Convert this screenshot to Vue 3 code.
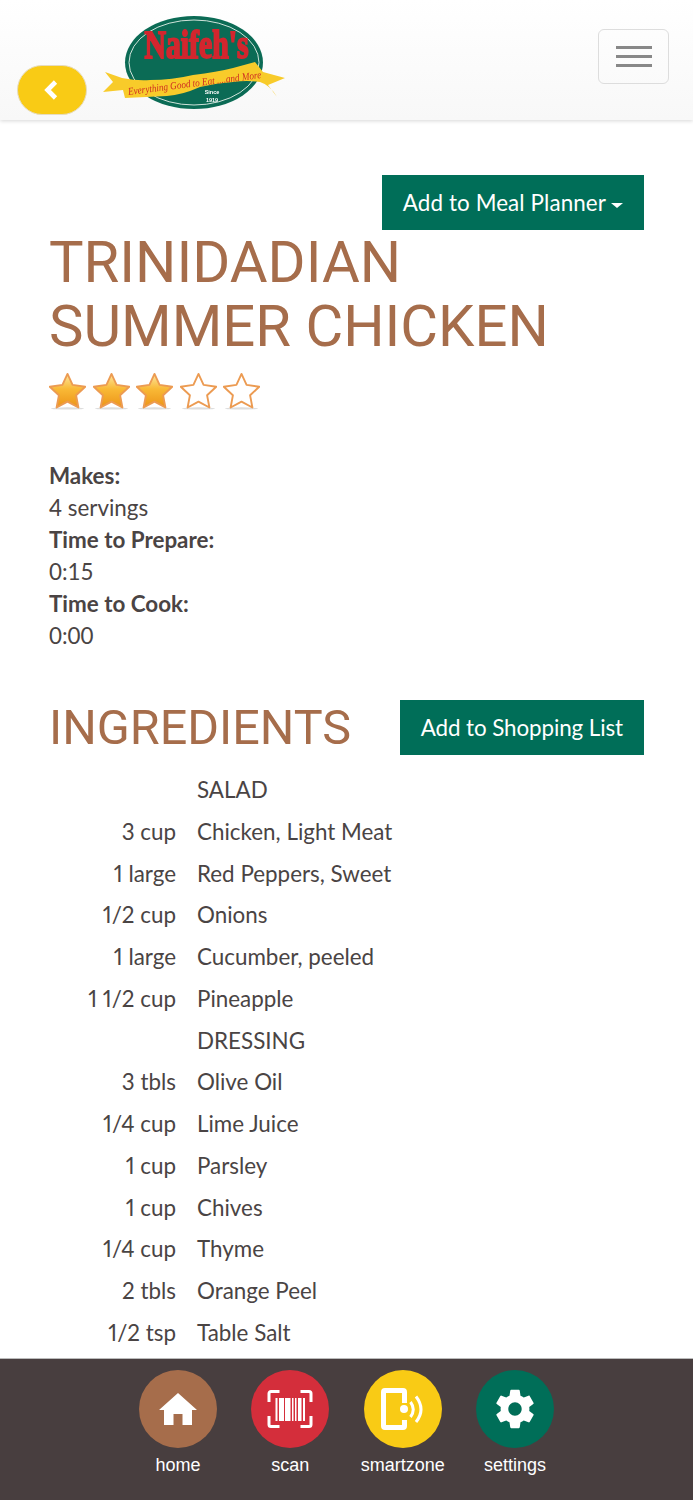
<script setup>
const rows = [
  ['', 'SALAD'], ['3 cup', 'Chicken, Light Meat'], ['1 large', 'Red Peppers, Sweet'],
  ['1/2 cup', 'Onions'], ['1 large', 'Cucumber, peeled'], ['1 1/2 cup', 'Pineapple'],
  ['', 'DRESSING'], ['3 tbls', 'Olive Oil'], ['1/4 cup', 'Lime Juice'], ['1 cup', 'Parsley'],
  ['1 cup', 'Chives'], ['1/4 cup', 'Thyme'], ['2 tbls', 'Orange Peel'], ['1/2 tsp', 'Table Salt'],
]
const stars = [true, true, true, false, false]
const facts = [['Makes:', '4 servings'], ['Time to Prepare:', '0:15'], ['Time to Cook:', '0:00']]
const starPath = 'M15 1.5 L19 10.2 L29 11.6 L21.8 18.4 L23.6 28 L15 23.4 L6.4 28 L8.200 18.4 L1 11.6 L11 10.2 Z'
</script>

<template>
  <div class="page">
    <header class="top">
      <button class="back" aria-label="Back">
        <svg width="18" height="22" viewBox="0 0 18 22"><path d="M13.500 3 L5.500 11 L13.500 19" fill="none" stroke="#fff" stroke-width="4.6"/></svg>
      </button>
      <svg class="logo" width="190" height="100" viewBox="0 0 190 100">
        <ellipse cx="92" cy="47.500" rx="69" ry="46.500" fill="#0b6b55"/>
        <ellipse cx="92" cy="47.500" rx="65" ry="42.500" fill="none" stroke="#cfe3da" stroke-width="1"/>
        <text x="94.500" y="43" text-anchor="middle" font-family="Liberation Serif, serif" font-weight="700" font-size="40" textLength="104" lengthAdjust="spacingAndGlyphs" fill="#d3262e" stroke="#d3262e" stroke-width="2">Naifeh's</text>
        <path d="M3 57 L20 63 Q35 66 48 65 Q70 65 91 60 Q115 57 131 53 L153 47 L161 57 L183 63 L166 70 L175 82 Q168 70 158 67 Q145 65 131 67 Q115 68 98 72 Q80 80 65 81 L23 83 L21 75 L1 77 L11 67 Z" fill="#f8cb2a"/>
        <text x="93" y="71.500" text-anchor="middle" font-family="Liberation Serif, serif" font-style="italic" font-size="10.500" fill="#cf2c22" transform="rotate(-7.200 93 71.500)" textLength="134" lengthAdjust="spacingAndGlyphs">Everything Good to Eat ....and More</text>
        <text x="110" y="79" text-anchor="middle" font-family="Liberation Sans, sans-serif" font-weight="700" font-size="5.500" fill="#fff">Since</text>
        <text x="110" y="86.500" text-anchor="middle" font-family="Liberation Sans, sans-serif" font-weight="700" font-size="5.500" fill="#fff">1919</text>
      </svg>
      <button class="burger" aria-label="Menu"><i></i><i></i><i></i></button>
    </header>

    <main class="content">
      <div class="planner-row">
        <button class="green meal">Add to Meal Planner<span class="caret"></span></button>
      </div>
      <h1>TRINIDADIAN SUMMER CHICKEN</h1>
      <div class="stars">
        <svg v-for="(on, i) in stars" :key="i" width="37" height="38" viewBox="0.500 0 29 30">
          <defs>
            <linearGradient id="gold" x1="0" y1="0" x2="0" y2="1">
              <stop offset="0" stop-color="#fde7a0"/><stop offset="0.45" stop-color="#f9b936"/><stop offset="1" stop-color="#ec9418"/>
            </linearGradient>
          </defs>
          <ellipse cx="15" cy="28.800" rx="13" ry="0.900" fill="#ddd"/>
          <path :d="starPath" :fill="on ? 'url(#gold)' : '#fff'" stroke="#ec9b52" stroke-width="1.500" stroke-linejoin="round"/>
        </svg>
      </div>
      <dl class="facts">
        <template v-for="f in facts" :key="f[0]">
          <dt>{{ f[0] }}</dt>
          <dd>{{ f[1] }}</dd>
        </template>
      </dl>
      <div class="ing-head">
        <h2>INGREDIENTS</h2>
        <button class="green shop">Add to Shopping List</button>
      </div>
      <div class="ing">
        <div v-for="(r, i) in rows" :key="i" class="row">
          <span class="qty">{{ r[0] }}</span>
          <span>{{ r[1] }}</span>
        </div>
      </div>
    </main>

    <footer class="bottom">
      <a class="nav">
        <span class="circle brown">
          <svg width="38" height="34" viewBox="1 0 38 34"><path d="M20 1 L39 18 L34 18 L34 33 L24.500 33 L24.500 22 L15.500 22 L15.500 33 L6 33 L6 18 L1 18 Z" fill="#fff"/></svg>
        </span>
        home
      </a>
      <a class="nav">
        <span class="circle red">
          <svg width="48" height="42" viewBox="0 0 48 42">
            <path d="M13.500 3.500 H5 A2 2 0 0 0 3 5.500 V14 M34.500 3.500 H43 A2 2 0 0 1 45 5.500 V14 M13.500 38.500 H5 A2 2 0 0 1 3 36.500 V28 M34.500 38.500 H43 A2 2 0 0 0 45 36.500 V28" fill="none" stroke="#fff" stroke-width="3"/>
            <path d="M9.500 10h2v23h-2zM13 10h5v23h-5zM19 10h5.500v23H19zM26 10h1.500v23H26zM29 10h1.500v23H29zM32 10h3.500v23H32zM37 10h2v23h-2z" fill="#fff"/>
          </svg>
        </span>
        scan
      </a>
      <a class="nav">
        <span class="circle yellow">
          <svg width="44" height="44" viewBox="0 0 44 44">
            <path d="M23.500 16 V5 A1.500 1.500 0 0 0 22 3.500 H4 A1.500 1.500 0 0 0 2.500 5 V39 A1.500 1.500 0 0 0 4 40.500 H22 A1.500 1.500 0 0 0 23.500 39 V33" fill="none" stroke="#fff" stroke-width="5"/>
            <circle cx="23" cy="22" r="4" fill="#fff"/>
            <path d="M29.500 15 Q35 22.500 29.500 30 M35 9.500 Q45 22.500 35 35" fill="none" stroke="#fff" stroke-width="3"/>
          </svg>
        </span>
        smartzone
      </a>
      <a class="nav">
        <span class="circle green-c">
          <svg width="46" height="46" viewBox="0 0 24 24"><path fill="#fff" d="M19.430 12.980c.04-.32.070-.64.070-.98s-.03-.66-.07-.98l2.110-1.650c.19-.15.240-.42.120-.64l-2-3.460c-.12-.22-.39-.3-.61-.22l-2.490 1c-.52-.4-1.080-.73-1.690-.98l-.38-2.650C14.460 2.180 14.250 2 14 2h-4c-.25 0-.46.180-.49.420l-.38 2.650c-.61.250-1.170.59-1.690.98l-2.490-1c-.23-.09-.49 0-.61.220l-2 3.460c-.13.220-.07.490.12.640l2.110 1.650c-.04.320-.07.650-.07.980s.03.660.07.980l-2.110 1.650c-.19.150-.24.420-.12.640l2 3.460c.12.220.39.300.61.220l2.490-1c.52.400 1.080.730 1.690.980l.38 2.650c.03.240.24.420.49.420h4c.25 0 .46-.18.49-.42l.38-2.650c.61-.25 1.170-.59 1.690-.98l2.490 1c.23.090.49 0 .61-.22l2-3.460c.12-.22.070-.49-.12-.64l-2.110-1.650zM12 15.500c-1.930 0-3.500-1.570-3.500-3.500s1.570-3.500 3.500-3.500 3.500 1.570 3.500 3.500-1.570 3.500-3.500 3.500z"/></svg>
        </span>
        settings
      </a>
    </footer>
  </div>
</template>

<style scoped>
.page {
  height: 1500px;
  width: 693px;
  display: flex;
  flex-direction: column;
  overflow: hidden;
  background: #fff;
  font-family: Lato, sans-serif;
  color: #4a4444;
}
.top {
  height: 120px;
  flex: none;
  position: relative;
  display: flex;
  align-items: flex-start;
  background: linear-gradient(#fff, #f8f8f8);
  box-shadow: 0 1px 4px rgba(0, 0, 0, 0.16);
}
.back {
  margin: 65px 0 0 17px;
  width: 70px;
  height: 50px;
  border: 1px solid #e6dcc0;
  border-radius: 25px;
  background: #f9cb15;
  padding: 0 2px 0 0;
  display: flex;
  align-items: center;
  justify-content: center;
}
.logo {
  margin: 15px 0 0 15px;
  filter: blur(0.5px);
}
.burger {
  margin: 29px 24px 0 auto;
  width: 71px;
  height: 55px;
  border: 1.5px solid #ddd;
  border-radius: 6px;
  background: transparent;
  display: flex;
  flex-direction: column;
  align-items: center;
  justify-content: center;
  gap: 6px;
  padding: 0;
}
.burger i {
  display: block;
  width: 36px;
  height: 3px;
  background: #888;
}
.content {
  flex: 1;
  min-height: 0;
  overflow: hidden;
  padding: 55px 49px 0;
}
.planner-row {
  display: flex;
  justify-content: flex-end;
}
.green {
  height: 55px;
  border: none;
  border-radius: 0;
  background: #006e58;
  color: #fff;
  font: 400 22.400px Lato, sans-serif;
  padding: 0 21px;
  white-space: nowrap;
}
.meal { letter-spacing: 0.1px; }
.shop { letter-spacing: -0.1px; }
.caret {
  display: inline-block;
  margin-left: 5px;
  vertical-align: middle;
  border-top: 5px solid #fff;
  border-left: 6px solid transparent;
  border-right: 6px solid transparent;
}
h1, h2 {
  margin: 0;
  font-family: Roboto, sans-serif;
  font-weight: 400;
  color: #a66d4b;
}
h1 {
  font-size: 58px;
  line-height: 64px;
  width: 560px;
}
.stars {
  display: flex;
  gap: 6.500px;
  margin-top: 14px;
}
.stars svg { display: block; }
.facts {
  margin: 50px 0 0;
  font-size: 22.400px;
  line-height: 32px;
}
.facts dt { font-weight: 700; }
.facts dd { margin: 0; }
.ing-head {
  margin-top: 48px;
  display: flex;
  justify-content: space-between;
  align-items: center;
}
h2 {
  font-size: 48.500px;
  line-height: 55px;
}
.ing {
  margin-top: 14px;
  font-size: 22.400px;
  line-height: 41.770px;
}
.row {
  display: flex;
  gap: 21px;
  height: 41.770px;
  white-space: nowrap;
}
.qty {
  width: 127px;
  text-align: right;
  font-variant-numeric: proportional-nums;
}
.bottom {
  flex: none;
  height: 142px;
  box-sizing: border-box;
  border-top: 1px solid #bbb;
  background: #483e3f;
  display: flex;
  justify-content: center;
  gap: 34.330px;
  padding-top: 11px;
}
.nav {
  width: 78px;
  display: flex;
  flex-direction: column;
  align-items: center;
  color: #fff;
  font: 400 18px/22px "Liberation Sans", Arial, sans-serif;
  white-space: nowrap;
}
.circle {
  width: 78px;
  height: 78px;
  border-radius: 50%;
  display: flex;
  align-items: center;
  justify-content: center;
  margin-bottom: 6px;
}
.brown { background: #a66d4b; }
.red { background: #d42e3b; }
.yellow { background: #f9cb15; }
.green-c { background: #006e58; }
</style>
